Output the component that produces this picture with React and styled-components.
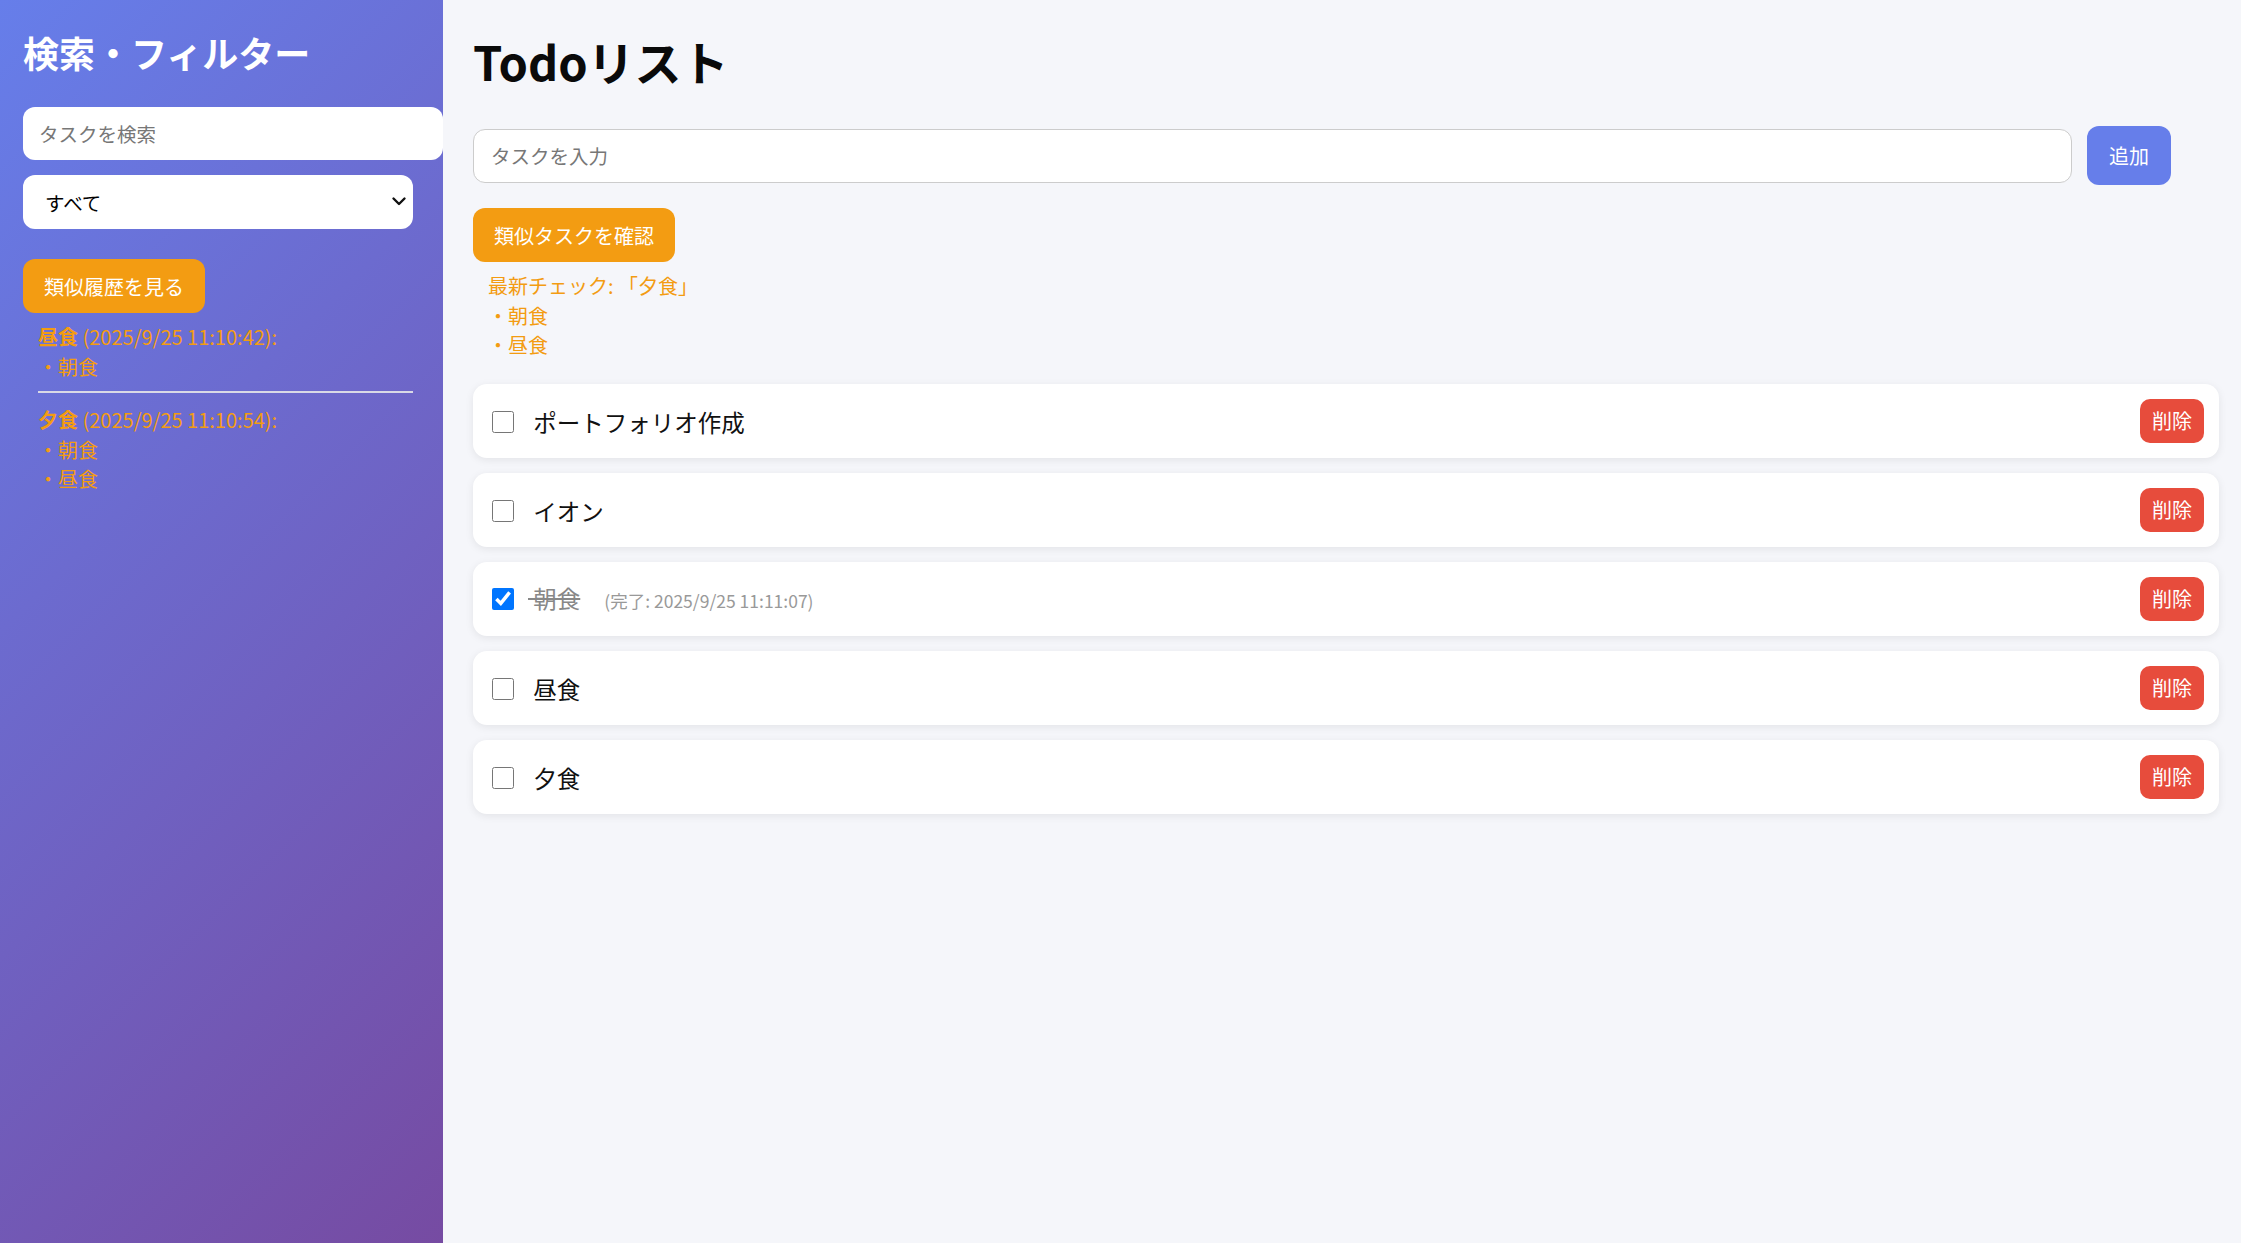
import React, { useState } from "react";
import styled, { createGlobalStyle } from "styled-components";

const GlobalStyle = createGlobalStyle`
  html, body { margin: 0; padding: 0; }
  body {
    font-family: "Noto Sans CJK JP", "Noto Sans", sans-serif;
    background: #f5f6fa;
  }
  * { box-sizing: border-box; }
`;

const Page = styled.div`
  display: flex;
  min-height: 100vh;
`;

const Sidebar = styled.aside`
  width: 443px;
  flex-shrink: 0;
  background: linear-gradient(135deg, #667eea 0%, #764ba2 100%);
  padding: 30px 30px 0 23px;
  display: flex;
  flex-direction: column;
`;

const SideTitle = styled.h2`
  margin: 0;
  color: #fff;
  font-size: 36px;
  line-height: 44px;
  font-weight: 700;
  white-space: nowrap;
`;

const SearchInput = styled.input`
  margin-top: 33px;
  width: calc(100% + 30px);
  height: 53px;
  border: none;
  border-radius: 12px;
  padding: 0 16px;
  font-family: inherit;
  font-size: 19.5px;
  background: #fff;
  outline: none;
  &::placeholder { color: #777; }
`;

const SelectWrap = styled.div`
  position: relative;
  margin-top: 15px;
  width: 100%;
`;

const Select = styled.select`
  width: 100%;
  height: 54px;
  appearance: none;
  border: none;
  border-radius: 12px;
  padding: 0 22px;
  font-family: inherit;
  font-size: 19.5px;
  color: #000;
  background: #fff;
  outline: none;
`;

const Chevron = styled.svg`
  position: absolute;
  right: 6px;
  top: 20px;
  pointer-events: none;
`;

const OrangeButton = styled.button`
  align-self: flex-start;
  height: 54px;
  padding: 0 21px;
  border: none;
  border-radius: 12px;
  background: #f39c12;
  color: #fff;
  font-family: inherit;
  font-size: 20px;
  white-space: nowrap;
  cursor: pointer;
  margin-top: ${(p) => p.$mt || 0}px;
`;

const History = styled.div`
  margin-top: 9px;
  margin-left: 15px;
  color: #f39c12;
  font-size: 20px;
  line-height: 29.5px;
`;

const HistoryItem = styled.div``;

const HistoryName = styled.b`
  font-weight: 700;
`;

const Divider = styled.hr`
  margin: 10px 0 12px;
  border: none;
  border-top: 2px solid #d9d9e6;
  height: 0;
`;

const Main = styled.main`
  flex: 1;
  min-width: 0;
  background: #f5f6fa;
  padding: 0 22px 40px 30px;
  display: flex;
  flex-direction: column;
`;

const Title = styled.h1`
  margin: 31px 0 0;
  font-size: 47px;
  line-height: 60px;
  font-weight: 700;
  color: #0a0a0a;
`;

const AddRow = styled.div`
  margin-top: 35px;
  display: grid;
  grid-template-columns: 1fr auto;
  align-items: center;
  gap: 15px;
  padding-right: 48px;
`;

const TaskInput = styled.input`
  height: 54px;
  border: 1px solid #cccccc;
  border-radius: 12px;
  padding: 0 17px;
  font-family: inherit;
  font-size: 19.5px;
  background: #fff;
  outline: none;
  &::placeholder { color: #777; }
`;

const AddButton = styled.button`
  height: 59px;
  padding: 0 22px;
  border: none;
  border-radius: 12px;
  background: #667eea;
  color: #fff;
  font-family: inherit;
  font-size: 20px;
  white-space: nowrap;
  cursor: pointer;
`;

const CheckResult = styled.div`
  margin-top: 9px;
  margin-left: 15px;
  color: #f39c12;
  font-size: 20px;
  line-height: 29.5px;
`;

const TaskList = styled.ul`
  list-style: none;
  margin: 24px 0 0;
  padding: 0;
  display: flex;
  flex-direction: column;
  gap: 15px;
`;

const Card = styled.li`
  height: 74px;
  background: #fff;
  border-radius: 14px;
  box-shadow: 0 2px 8px rgba(0, 0, 0, 0.08);
  padding: 0 15px 0 19px;
  display: flex;
  align-items: center;
  justify-content: space-between;
`;

const TaskLabel = styled.div`
  font-size: 23.5px;
  line-height: 32px;
  color: #111;
  white-space: nowrap;
  padding-top: 2px;
`;

const Check = styled.input`
  width: 22px;
  height: 22px;
  margin: 0 14px 0 0;
  vertical-align: middle;
  position: relative;
  top: -3px;
`;

const TaskText = styled.span`
  color: ${(p) => (p.$done ? "#888" : "#111")};
  text-decoration: ${(p) => (p.$done ? "line-through" : "none")};
  white-space: pre;
`;

const DoneAt = styled.span`
  margin-left: 24px;
  font-size: 17.5px;
  color: #999;
`;

const DeleteButton = styled.button`
  height: 44px;
  padding: 0 12px;
  border: none;
  border-radius: 10px;
  background: #e74c3c;
  color: #fff;
  font-family: inherit;
  font-size: 20px;
  cursor: pointer;
`;

const initialTasks = [
  { id: 1, text: "ポートフォリオ作成", done: false },
  { id: 2, text: "イオン", done: false },
  { id: 3, text: "朝食", done: true, doneAt: "2025/9/25 11:11:07" },
  { id: 4, text: "昼食", done: false },
  { id: 5, text: "夕食", done: false },
];

const history = [
  { name: "昼食", at: "2025/9/25 11:10:42", similar: ["朝食"] },
  { name: "夕食", at: "2025/9/25 11:10:54", similar: ["朝食", "昼食"] },
];

export default function App() {
  const [tasks, setTasks] = useState(initialTasks);

  const toggle = (id) =>
    setTasks((ts) => ts.map((t) => (t.id === id ? { ...t, done: !t.done } : t)));

  return (
    <>
      <GlobalStyle />
      <Page>
        <Sidebar>
          <SideTitle>検索・フィルター</SideTitle>
          <SearchInput placeholder="タスクを検索" />
          <SelectWrap>
            <Select defaultValue="all">
              <option value="all">すべて</option>
              <option value="active">未完了</option>
              <option value="done">完了</option>
            </Select>
            <Chevron width="16" height="14" viewBox="0 0 16 14">
              <path d="M2.5 3.5 L8 9 L13.5 3.5" fill="none" stroke="#111" strokeWidth="2.4" strokeLinecap="round" strokeLinejoin="round" />
            </Chevron>
          </SelectWrap>
          <OrangeButton $mt={30}>類似履歴を見る</OrangeButton>
          <History>
            {history.map((h, i) => (
              <React.Fragment key={h.name}>
                {i > 0 && <Divider />}
                <HistoryItem>
                  <div>
                    <HistoryName>{h.name}</HistoryName> ({h.at}):
                  </div>
                  {h.similar.map((s) => (
                    <div key={s}>・{s}</div>
                  ))}
                </HistoryItem>
              </React.Fragment>
            ))}
          </History>
        </Sidebar>
        <Main>
          <Title>Todoリスト</Title>
          <AddRow>
            <TaskInput placeholder="タスクを入力" />
            <AddButton>追加</AddButton>
          </AddRow>
          <OrangeButton $mt={23}>類似タスクを確認</OrangeButton>
          <CheckResult>
            <div>最新チェック: 「夕食」</div>
            <div>・朝食</div>
            <div>・昼食</div>
          </CheckResult>
          <TaskList>
            {tasks.map((t) => (
              <Card key={t.id}>
                <TaskLabel>
                  <Check type="checkbox" checked={t.done} onChange={() => toggle(t.id)} />
                  <TaskText $done={t.done}>{" " + t.text}</TaskText>
                  {t.done && t.doneAt && <DoneAt>(完了: {t.doneAt})</DoneAt>}
                </TaskLabel>
                <DeleteButton>削除</DeleteButton>
              </Card>
            ))}
          </TaskList>
        </Main>
      </Page>
    </>
  );
}
